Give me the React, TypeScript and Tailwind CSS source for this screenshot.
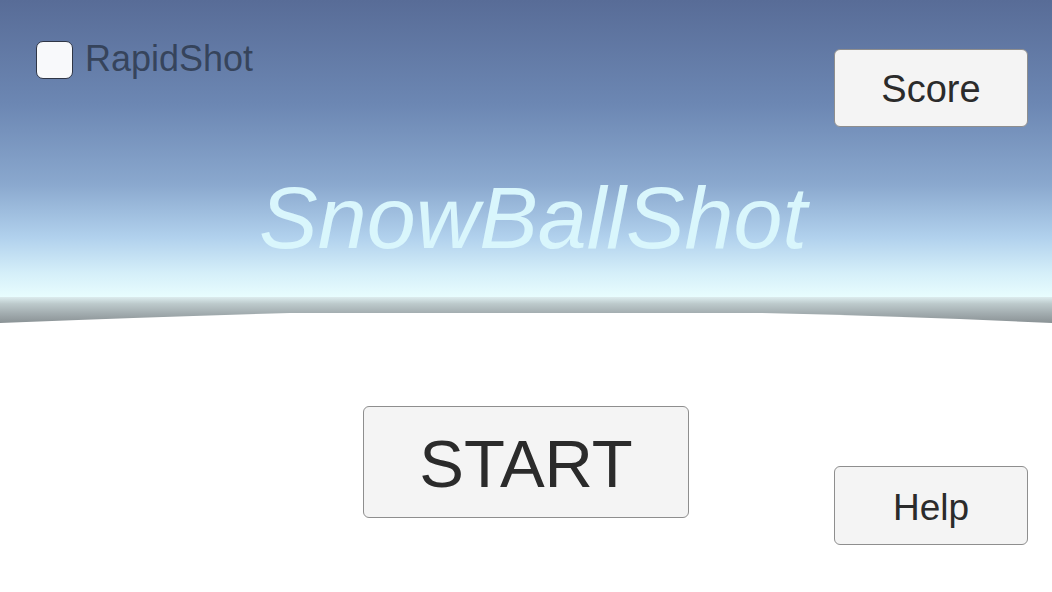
import React, { FC, useState } from "react";

// Backdrop: sky fading into a pale horizon, grey haze band, snowy ground curving away at the edges
const Scenery: FC = () => (
    <svg className="absolute inset-0 h-full w-full" viewBox="0 0 1052 592" preserveAspectRatio="none">
        <defs>
            <linearGradient id="sky" x1="0" y1="0" x2="0" y2="1">
                <stop offset="0" stopColor="#586c97" />
                <stop offset="0.35" stopColor="#6c87b3" />
                <stop offset="0.62" stopColor="#8aa8ce" />
                <stop offset="0.8" stopColor="#b1d1ed" />
                <stop offset="0.92" stopColor="#d5eff9" />
                <stop offset="1" stopColor="#e8fdfe" />
            </linearGradient>
            <linearGradient id="haze" x1="0" y1="0" x2="0" y2="1">
                <stop offset="0" stopColor="#dcecee" />
                <stop offset="0.25" stopColor="#bdcacc" />
                <stop offset="0.6" stopColor="#a3adb0" />
                <stop offset="1" stopColor="#878f92" />
            </linearGradient>
        </defs>
        <rect x="0" y="0" width="1052" height="297" fill="url(#sky)" />
        <rect x="0" y="297" width="1052" height="27" fill="url(#haze)" />
        <path
            d="M0 323 Q 150 317 290 313 L 760 313 Q 900 316 1052 323 L 1052 592 L 0 592 Z"
            fill="#ffffff"
        />
    </svg>
);

interface MenuButtonProps {
    label: string,
    className: string,
}

const MenuButton: FC<MenuButtonProps> = ({ label, className }) => (
    <button
        type="button"
        className={`flex items-center justify-center rounded-[6px] border border-[#8e8e8e] bg-[#f4f4f4] text-[#2b2b2b] leading-none ${className}`}
    >
        {label}
    </button>
);

const App: FC = () => {
    const [rapid, setRapid] = useState(false);

    return (
        <div
            className="relative h-[592px] w-full overflow-hidden"
            style={{ fontFamily: '"Liberation Sans", Arial, sans-serif' }}
        >
            <Scenery />

            <div className="relative flex flex-col">
                {/* top bar: rapid fire toggle + score */}
                <div className="flex items-start justify-between pl-[36px] pr-[24px] pt-[41px]">
                    <label className="flex cursor-pointer items-center gap-[12px]">
                        <input
                            type="checkbox"
                            checked={rapid}
                            onChange={(e) => setRapid(e.target.checked)}
                            className="sr-only"
                        />
                        <span className="flex h-[38px] w-[37px] items-center justify-center rounded-[7px] border border-[#2f3646] bg-[#f8f9fb] text-[26px] text-[#333]">
                            {rapid ? "✓" : ""}
                        </span>
                        <span className="pb-[2px] text-[36px] leading-none text-[#2e3a4e]/85">RapidShot</span>
                    </label>

                    <MenuButton label="Score" className="mt-[8px] h-[78px] w-[194px] pt-[2px] text-[38px]" />
                </div>

                <h1 className="mt-[47px] ml-[14px] text-center text-[88px] italic leading-none text-[#d9f6fc]">
                    SnowBallShot
                </h1>

                <div className="mt-[144px] grid grid-cols-[1fr_auto_1fr] items-start px-[24px]">
                    <div />
                    <MenuButton label="START" className="h-[112px] w-[326px] pt-[2px] text-[67px]" />
                    <div className="flex justify-end">
                        <MenuButton label="Help" className="mt-[60px] h-[79px] w-[194px] pt-[4px] text-[37px]" />
                    </div>
                </div>
            </div>
        </div>
    );
};

export default App;
